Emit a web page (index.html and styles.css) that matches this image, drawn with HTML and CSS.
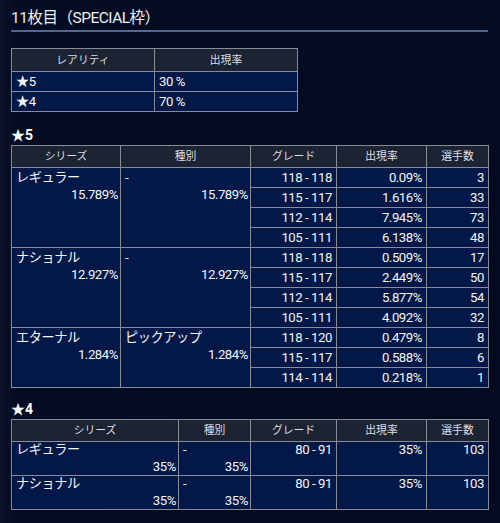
FILE: index.html
```html
<!DOCTYPE html>
<html lang="ja">
<head>
<meta charset="utf-8">
<link rel="stylesheet" href="styles.css">
</head>
<body>
<main class="page">
  <h1 class="title">11枚目（SPECIAL枠）</h1>

  <table class="grid rarity">
    <colgroup><col class="c-half"><col class="c-half"></colgroup>
    <thead><tr><th>レアリティ</th><th>出現率</th></tr></thead>
    <tbody>
      <tr><td>★5</td><td>30 %</td></tr>
      <tr><td>★4</td><td>70 %</td></tr>
    </tbody>
  </table>

  <h2 class="section">★5</h2>
  <table class="grid detail">
    <colgroup><col class="c-series5"><col class="c-type5"><col class="c-grade"><col class="c-rate"><col class="c-count"></colgroup>
    <thead><tr><th>シリーズ</th><th>種別</th><th>グレード</th><th>出現率</th><th>選手数</th></tr></thead>
    <tbody>
      <tr>
        <td rowspan="4" class="stack"><div>レギュラー</div><div class="r">15.789%</div></td>
        <td rowspan="4" class="stack"><div>-</div><div class="r">15.789%</div></td>
        <td class="r">118 - 118</td><td class="r">0.09%</td><td class="r">3</td>
      </tr>
      <tr><td class="r">115 - 117</td><td class="r">1.616%</td><td class="r">33</td></tr>
      <tr><td class="r">112 - 114</td><td class="r">7.945%</td><td class="r">73</td></tr>
      <tr><td class="r">105 - 111</td><td class="r">6.138%</td><td class="r">48</td></tr>
      <tr>
        <td rowspan="4" class="stack"><div>ナショナル</div><div class="r">12.927%</div></td>
        <td rowspan="4" class="stack"><div>-</div><div class="r">12.927%</div></td>
        <td class="r">118 - 118</td><td class="r">0.509%</td><td class="r">17</td>
      </tr>
      <tr><td class="r">115 - 117</td><td class="r">2.449%</td><td class="r">50</td></tr>
      <tr><td class="r">112 - 114</td><td class="r">5.877%</td><td class="r">54</td></tr>
      <tr><td class="r">105 - 111</td><td class="r">4.092%</td><td class="r">32</td></tr>
      <tr>
        <td rowspan="3" class="stack"><div>エターナル</div><div class="r">1.284%</div></td>
        <td rowspan="3" class="stack"><div>ピックアップ</div><div class="r">1.284%</div></td>
        <td class="r">118 - 120</td><td class="r">0.479%</td><td class="r">8</td>
      </tr>
      <tr><td class="r">115 - 117</td><td class="r">0.588%</td><td class="r">6</td></tr>
      <tr><td class="r">114 - 114</td><td class="r">0.218%</td><td class="r">1</td></tr>
    </tbody>
  </table>

  <h2 class="section">★4</h2>
  <table class="grid detail tall">
    <colgroup><col class="c-series4"><col class="c-type4"><col class="c-grade"><col class="c-rate"><col class="c-count"></colgroup>
    <thead><tr><th>シリーズ</th><th>種別</th><th>グレード</th><th>出現率</th><th>選手数</th></tr></thead>
    <tbody>
      <tr>
        <td class="stack"><div>レギュラー</div><div class="r">35%</div></td>
        <td class="stack"><div>-</div><div class="r">35%</div></td>
        <td class="r">80 - 91</td><td class="r">35%</td><td class="r">103</td>
      </tr>
      <tr>
        <td class="stack"><div>ナショナル</div><div class="r">35%</div></td>
        <td class="stack"><div>-</div><div class="r">35%</div></td>
        <td class="r">80 - 91</td><td class="r">35%</td><td class="r">103</td>
      </tr>
    </tbody>
  </table>
</main>
</body>
</html>
```

FILE: styles.css
```css
* { box-sizing: border-box; }

html, body {
  margin: 0;
  padding: 0;
}

body {
  width: 500px;
  height: 523px;
  overflow: hidden;
  background: linear-gradient(to right, #0b1429 0, #030c22 14px, #020b20 100%);
  color: #f4f5f8;
  font-family: Roboto, "Noto Sans CJK JP", sans-serif;
}

.page {
  width: 477px;
  margin-left: 11px;
}

.title {
  margin: 0;
  padding: 8px 0 2px;
  font-size: 15.5px;
  line-height: 20px;
  font-weight: 400;
  letter-spacing: -0.5px;
  color: #eef0f5;
  border-bottom: 2px solid #56658f;
}

.section {
  margin: 15px 0 0;
  font-size: 14px;
  line-height: 17px;
  font-weight: 700;
  color: #ffffff;
}

.section + .tall { margin-top: 1px; }

.grid {
  border-collapse: collapse;
  table-layout: fixed;
  font-size: 13.2px;
  letter-spacing: -0.45px;
}

.grid th,
.grid td {
  border: 1px solid #868b95;
}

.grid th {
  background: #1c2333;
  color: #dcdfe5;
  font-size: 10.8px;
  font-weight: 400;
  letter-spacing: 0;
  line-height: 17px;
  padding: 2px 3px 2px;
  text-align: center;
}

.grid td {
  background: #021848;
  padding: 1px 3px 1px 4px;
  line-height: 17px;
  vertical-align: top;
  text-align: left;
  white-space: nowrap;
}

.rarity {
  width: 286px;
  margin-top: 16px;
}

.rarity th { padding: 3px 3px 2px; }

.c-half { width: 143px; }

.detail { width: 477px; margin-top: 1px; }

.c-series5 { width: 109px; }
.c-type5 { width: 130px; }
.c-series4 { width: 167px; }
.c-type4 { width: 72px; }
.c-grade { width: 86px; }
.c-rate { width: 90px; }
.c-count { width: 62px; }

.grid td.r,
.grid .r { text-align: right; }

.grid td.r { padding-right: 4px; }

.stack .r { padding-right: 0; margin-right: -1px; }

.detail tbody tr { height: 19.9px; }

.tall td { padding-top: 0; padding-bottom: 0; line-height: 16.5px; }

.tall + * { margin: 0; }

.detail + .section { margin-top: 13px; }
```
